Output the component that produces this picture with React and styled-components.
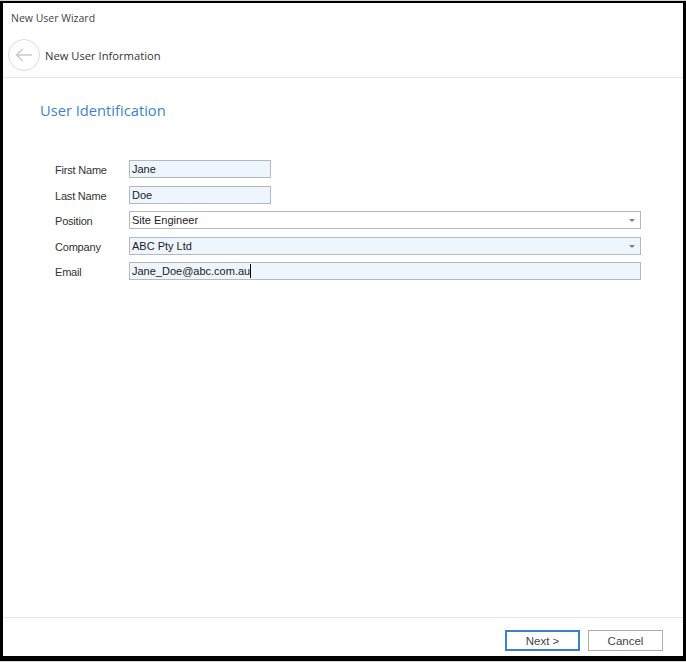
import React from 'react';
import styled, { createGlobalStyle } from 'styled-components';

const GlobalStyle = createGlobalStyle`
  html, body {
    margin: 0;
    padding: 0;
    background: #d4d4d4;
  }
  #root {
    padding-top: 1px;
  }
`;

const Window = styled.div`
  width: 680px;
  height: 653px;
  border-style: solid;
  border-color: #000;
  border-width: 2px 3px 5px 3px;
  background: #fff;
  display: flex;
  flex-direction: column;
  box-shadow: 0 1px 0 #5b9bd5;
  font-family: "Open Sans", "Noto Sans", sans-serif;
`;

const TitleBar = styled.div`
  height: 30px;
  display: flex;
  align-items: center;
  padding-left: 8px;
  font-size: 10.5px;
  color: #444;
`;

const Header = styled.div`
  height: 44px;
  display: flex;
  align-items: center;
  gap: 5px;
  padding-left: 5px;
  border-bottom: 1px solid #e6e6e6;
  font-size: 11.2px;
  color: #333;
`;

const BackButton = styled.button`
  width: 32px;
  height: 32px;
  padding: 0;
  border: 1.5px solid #dcdcdc;
  border-radius: 50%;
  background: #fff;
  display: flex;
  align-items: center;
  justify-content: center;
`;

const Body = styled.div`
  flex: 1;
  padding: 22px 0 0 37px;
`;

const SectionTitle = styled.h2`
  margin: 0;
  font-weight: 400;
  font-size: 14.7px;
  color: #3a86c8;
  line-height: 20px;
`;

const Form = styled.div`
  margin-top: 40px;
  margin-left: 15px;
  display: grid;
  grid-template-columns: 74px auto;
  row-gap: 7.6px;
  align-items: center;
  font-family: "Liberation Sans", Arial, sans-serif;
`;

const Label = styled.label`
  font-size: 11px;
  color: #333;
  letter-spacing: -0.2px;
  padding-top: 2px;
`;

const Field = styled.div`
  position: relative;
  width: ${(p) => (p.$wide ? '508px' : '138px')};
  height: 16px;
  border: 1px solid #b4b9c1;
  background: ${(p) => (p.$white ? '#fff' : '#eef5fd')};
  display: flex;
  align-items: center;
  padding-left: 2px;
  font-size: 11px;
  color: #222;
  box-sizing: content-box;
`;

const Caret = styled.span`
  display: inline-block;
  width: 1px;
  height: 14px;
  background: #000;
`;

const Arrow = styled.span`
  position: absolute;
  right: 5px;
  top: 7px;
  width: 0;
  height: 0;
  border-left: 3px solid transparent;
  border-right: 3px solid transparent;
  border-top: 3px solid #808080;
`;

const Footer = styled.div`
  height: 39px;
  border-top: 1px solid #e6e6e6;
  display: flex;
  justify-content: flex-end;
  align-items: flex-start;
  gap: 8px;
  padding: 12px 20px 0 0;
  box-sizing: border-box;
`;

const Button = styled.button`
  width: 75px;
  height: 21px;
  padding: 0;
  background: #fff;
  border: ${(p) => (p.$primary ? '2px solid #3c81c1' : '1px solid #adadad')};
  font-family: "Liberation Sans", Arial, sans-serif;
  font-size: 11.5px;
  color: #444;
  box-sizing: border-box;
`;

const fields = [
  { label: 'First Name', value: 'Jane' },
  { label: 'Last Name', value: 'Doe' },
  { label: 'Position', value: 'Site Engineer', wide: true, white: true, select: true },
  { label: 'Company', value: 'ABC Pty Ltd', wide: true, select: true },
  { label: 'Email', value: 'Jane_Doe@abc.com.au', wide: true, caret: true },
];

export default function App() {
  return (
    <>
      <GlobalStyle />
      <Window>
        <TitleBar>New User Wizard</TitleBar>
        <Header>
          <BackButton aria-label="Back">
            <svg width="20" height="16" viewBox="0 0 20 16">
              <path
                d="M18 8H2.5M8.5 2L2.5 8l6 6"
                fill="none"
                stroke="#c9c9c9"
                strokeWidth="1.4"
              />
            </svg>
          </BackButton>
          New User Information
        </Header>
        <Body>
          <SectionTitle>User Identification</SectionTitle>
          <Form>
            {fields.map((f) => (
              <React.Fragment key={f.label}>
                <Label>{f.label}</Label>
                <Field $wide={f.wide} $white={f.white}>
                  {f.value}
                  {f.caret && <Caret />}
                  {f.select && <Arrow />}
                </Field>
              </React.Fragment>
            ))}
          </Form>
        </Body>
        <Footer>
          <Button $primary>Next &gt;</Button>
          <Button>Cancel</Button>
        </Footer>
      </Window>
    </>
  );
}
